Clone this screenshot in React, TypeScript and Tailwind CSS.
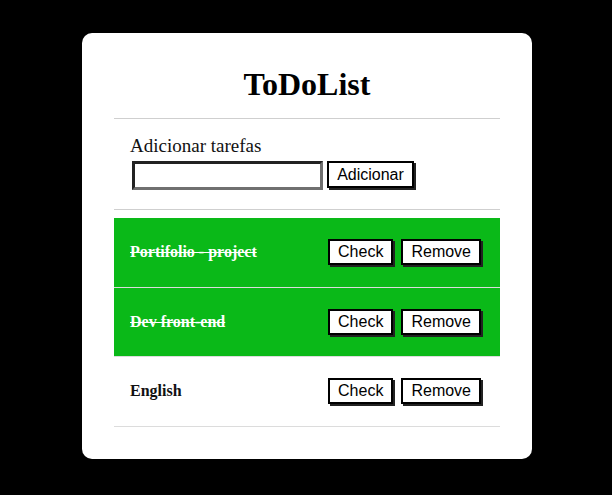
import { useState } from "react";

interface Task {
  id: number;
  text: string;
  done: boolean;
}

const initialTasks: Task[] = [
  { id: 1, text: "Portifolio - project", done: true },
  { id: 2, text: "Dev front-end", done: true },
  { id: 3, text: "English", done: false },
];

const btn =
  "h-[26px] px-2 bg-white border-2 border-black shadow-[2px_2px_0_#222] text-[16px] leading-[18px] text-black font-['Liberation_Sans',Arial,sans-serif]";

export default function App() {
  const [tasks, setTasks] = useState<Task[]>(initialTasks);
  const [draft, setDraft] = useState("");

  const add = () => {
    if (!draft.trim()) return;
    setTasks((t) => [...t, { id: Date.now(), text: draft.trim(), done: false }]);
    setDraft("");
  };

  return (
    <div className="min-h-[495px] bg-black flex justify-center pl-[2px] pt-[33px] font-['Liberation_Serif','Times_New_Roman',serif]">
      <div className="w-[450px] h-[426px] bg-white rounded-[10px] px-8 pt-[33px]">
        <h1 className="text-[32px] leading-[37px] font-bold text-center text-black">ToDoList</h1>
        <hr className="mt-[15px] border-0 border-t border-[#cfcfcf]" />

        {/* adicionar */}
        <div className="pl-4 pt-4">
          <div className="text-[19px] leading-[22px] text-[#111]">Adicionar tarefas</div>
          <div className="flex items-start gap-1 mt-[4px]">
            <input
              value={draft}
              onChange={(e) => setDraft(e.target.value)}
              className="ml-[2px] w-[191px] h-[29px] border-[3px] border-t-[#222] border-l-[#222] border-b-[#707070] border-r-[#707070] bg-white outline-none px-1"
            />
            <button onClick={add} className={`${btn} h-[27px] w-[87px]`}>
              Adicionar
            </button>
          </div>
        </div>
        <hr className="mt-[19px] border-0 border-t border-[#cfcfcf]" />

        {/* lista */}
        <ul className="mt-2">
          {tasks.map((t) => (
            <li
              key={t.id}
              className={`h-[69.6px] flex items-center justify-between pl-4 pr-[19px] border-b border-[#dcdcdc] ${
                t.done ? "bg-[#0ab918]" : "bg-white"
              }`}
            >
              <span
                className={`text-[16px] font-bold ${t.done ? "text-white line-through" : "text-[#111]"}`}
              >
                {t.text}
              </span>
              <div className="flex gap-2">
                <button
                  className={btn}
                  onClick={() => setTasks((all) => all.map((x) => (x.id === t.id ? { ...x, done: !x.done } : x)))}
                >
                  Check
                </button>
                <button className={btn} onClick={() => setTasks((all) => all.filter((x) => x.id !== t.id))}>
                  Remove
                </button>
              </div>
            </li>
          ))}
        </ul>
      </div>
    </div>
  );
}
